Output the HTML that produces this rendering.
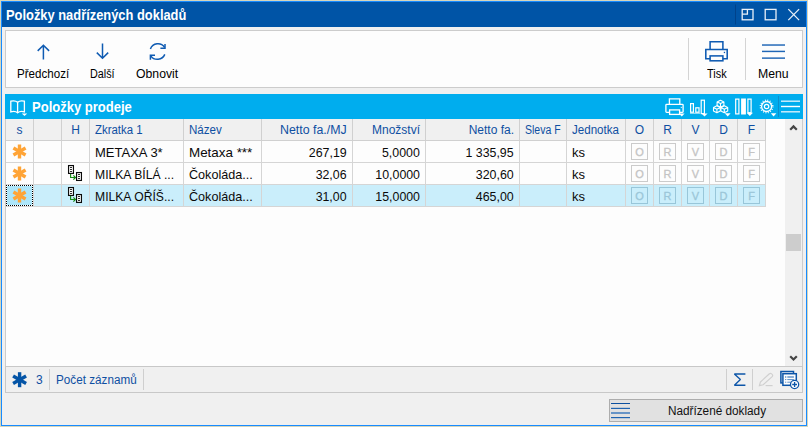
<!DOCTYPE html>
<html lang="cs">
<head>
<meta charset="utf-8">
<title>Položky nadřízených dokladů</title>
<style>
html,body{margin:0;padding:0;}
body{width:808px;height:427px;overflow:hidden;background:#d6d6bb;font-family:"Liberation Sans",sans-serif;position:relative;}
.abs{position:absolute;}
svg{display:block;overflow:visible;}
#win{left:1px;top:1px;width:804px;height:423px;border:1px solid #188bff;background:#f0f0f0;}
#title{left:2px;top:2px;width:804px;height:25px;background:#0054a6;}
#titletxt{left:6px;top:7px;color:#fff;font-weight:bold;font-size:14px;line-height:16px;white-space:nowrap;transform:scaleX(0.92);transform-origin:0 0;}
#tb{left:5px;top:30px;width:796px;height:56px;border:1px solid #ccc;background:#fdfdfd;}
.lbl{transform-origin:0 0;font-size:12px;line-height:14px;color:#000;white-space:nowrap;top:67px;}
.vsep{width:1px;background:#d4d4d4;}
#hdr{left:5px;top:94px;width:798px;height:25px;background:#00adee;}
#hdrtxt{left:32px;top:99px;color:#fff;font-weight:bold;font-size:14px;line-height:16px;white-space:nowrap;transform:scaleX(0.93);transform-origin:0 0;}
#grid{left:5px;top:119px;width:798px;height:247px;background:#fdfdfd;}
#gridl{left:5px;top:119px;width:1px;height:248px;background:#ccc;}
.hc{top:119px;height:21px;background:#f0f0f0;border-right:1px solid #d0d0d0;border-bottom:1px solid #d0d0d0;color:#0e4fa2;font-size:12px;line-height:22px;white-space:nowrap;overflow:hidden;}
.c{height:21px;border-right:1px solid #d5d5d5;border-bottom:1px solid #d5d5d5;font-size:13px;line-height:23px;color:#0a0a0a;white-space:nowrap;overflow:hidden;background:#fdfdfd;}
.c.sel{background:#caeefb;}
.c.foc{background:#ade6fa;}
.ast{position:absolute;left:6px;top:3px;}
.doc{position:absolute;left:6px;top:2px;}
.box{position:absolute;left:5px;top:2px;width:15px;height:15px;border:1px solid #cbcbcb;color:#c4c4c4;-webkit-text-stroke:0.3px #c4c4c4;font-size:11px;line-height:17px;text-align:center;}
.sel .box{border-color:#98c6d9;color:#9bc6d8;-webkit-text-stroke-color:#9bc6d8;}
#focusw{left:6px;top:185px;width:27px;height:21px;box-sizing:border-box;border:1px solid #fff;}
#focus{left:6px;top:185px;width:27px;height:21px;box-sizing:border-box;border:1px dotted #000;}
#sbtrack{left:785px;top:119px;width:17px;height:247px;background:#f0f0f0;}
#sbr{left:802px;top:119px;width:1px;height:248px;background:#ccc;}
#thumb{left:786px;top:234px;width:15px;height:17px;background:#cdcdcd;}
#status{left:5px;top:366px;width:796px;height:25px;border:1px solid #c8c8c8;background:#f0f0f0;}
.st{font-size:12px;line-height:14px;color:#0e4fa2;white-space:nowrap;top:373px;}
.ssep{width:1px;background:#cfcfcf;top:369px;height:21px;}
#btn{left:609px;top:399px;width:192px;height:21px;border:1px solid #adadad;background:#e1e1e1;}
#btntxt{left:609px;top:404px;width:216px;transform:scaleX(0.98);text-align:center;font-size:12px;line-height:14px;color:#111;white-space:nowrap;}
.sx{display:inline-block;transform-origin:0 50%;}
.r .sx{transform-origin:100% 50%;}
</style>
</head>
<body>
<div id="win" class="abs"></div>
<div id="title" class="abs"></div>
<div id="titletxt" class="abs">Položky nadřízených dokladů</div>
<!-- title buttons -->
<svg class="abs" style="left:730px;top:2px" width="76" height="25" viewBox="730 2 76 25">
 <line x1="735.5" y1="4.5" x2="735.5" y2="24.5" stroke="#00428a" stroke-width="1"/>
 <g fill="none" stroke="#e9f0f8" stroke-width="1.3">
  <rect x="742.2" y="9.4" width="10.8" height="10.4"/>
  <path d="M747.4 9.4v4.8h-5.2"/>
  <rect x="765.2" y="9.4" width="10.8" height="10.4"/>
  <path d="M788.3 9.1l10.8 11M799.1 9.1l-10.8 11"/>
 </g>
</svg>

<div id="tb" class="abs"></div>
<!-- toolbar icons -->
<svg class="abs" style="left:6px;top:31px" width="796" height="56" viewBox="6 31 796 56">
 <g fill="none" stroke="#0f5bb2" stroke-width="1.5">
  <path d="M43.4 59.6V45.4M37.7 50.9l5.7-5.7l5.7 5.7"/>
  <path d="M102.5 43.5V58.2M96.8 52.6l5.7 5.7l5.7-5.7"/>
  <!-- refresh -->
  <path d="M150.4 49A8 8 0 0 1 164.6 47.4"/>
  <path d="M165 44v4.2h-4.6"/>
  <path d="M164.8 54.4A8 8 0 0 1 150.8 55.8"/>
  <path d="M150.4 59.8v-4.6h4.6"/>
 </g>
 <!-- printer -->
 <g fill="none" stroke="#0f5bb2" stroke-width="1.55" stroke-linejoin="miter">
  <path d="M710.1 49.4V41.8H722.9V49.4"/>
  <path d="M710.1 58.8H705.8V49.4H727.2V58.8H722.9"/>
  <rect x="710.1" y="55.9" width="12.8" height="4.9"/>
 </g>
 <rect x="723.8" y="51.8" width="1.3" height="1.3" fill="#0f5bb2"/>
 <!-- menu -->
 <g fill="#1f66b6">
  <rect x="762" y="44.3" width="23" height="1.45"/>
  <rect x="762" y="50.7" width="23" height="1.45"/>
  <rect x="762" y="57.4" width="23" height="1.45"/>
 </g>
</svg>
<div class="abs vsep" style="left:688px;top:38px;height:42px"></div>
<div class="abs vsep" style="left:745px;top:38px;height:42px"></div>
<div id="l1" class="abs lbl" style="left:17px;transform:scaleX(0.965)">Předchozí</div>
<div id="l2" class="abs lbl" style="left:90px;transform:scaleX(0.9)">Další</div>
<div id="l3" class="abs lbl" style="left:136px;transform:scaleX(1.02)">Obnovit</div>
<div id="l4" class="abs lbl" style="left:707px;transform:scaleX(0.91)">Tisk</div>
<div id="l5" class="abs lbl" style="left:758px;transform:scaleX(1.02)">Menu</div>

<div id="hdr" class="abs"></div>
<div id="hdrtxt" class="abs">Položky prodeje</div>
<!-- header icons -->
<svg class="abs" style="left:5px;top:94px" width="798" height="25" viewBox="5 94 798 25">
 <!-- book -->
 <g fill="none" stroke="#fff" stroke-width="1.3">
  <path d="M17.6 102.2c-1.6-1.4-4.6-1.6-6.8-1v10.600000000000001c2.2-0.6 5.2-0.4 6.8 1c1.6-1.4 4.6-1.6 6.8-1v-10.600000000000001c-2.2-0.6-5.2-0.4-6.8 1z"/>
  <path d="M17.6 102.2v10.6"/>
 </g>
 <path d="M21.8 113.4h5.4l-2.700000000000003 2.6z" fill="#fff"/>
 <!-- printer -->
 <g fill="none" stroke="#fff" stroke-width="1.3">
  <path d="M669.4 104.2v-5.3h10.4v5.3"/>
  <path d="M669.4 112.3h-2.8a0.7 0.7 0 0 1-0.7-0.7v-6.6a0.7 0.7 0 0 1 0.7-0.7h15.8a0.7 0.7 0 0 1 0.7 0.7v6.6a0.7 0.7 0 0 1-0.7 0.7h-2.8"/>
  <rect x="669.6" y="109.9" width="10" height="4.5"/>
  <rect x="680.8" y="106.9" width="1" height="1" fill="#fff" stroke="none"/>
 </g>
 <path d="M679 113.5h5.6l-2.8 2.9z" fill="#fff"/>
 <!-- bars -->
 <g fill="none" stroke="#fff" stroke-width="1.2">
  <rect x="690.6" y="103.6" width="2.8" height="8.6"/>
  <rect x="695.8" y="107.8" width="3.2" height="4.4"/>
  <rect x="701.2" y="100.2" width="3.2" height="13.4"/>
 </g>
 <path d="M701.4 113.4h6.2l-3.1 3.1z" fill="#fff"/>
 <path d="M690 113.2h10" stroke="#fff" stroke-width="1" fill="none" opacity="0.8"/>
 <!-- cubes -->
 <g fill="none" stroke="#fff" stroke-width="1.1" stroke-linejoin="round">
  <path d="M720.5 100.2l3.4 1.7v3.6l-3.4 1.7l-3.4-1.7v-3.6zM717.1 101.9l3.4 1.7l3.4-1.7M720.5 103.6v3.6"/>
  <path d="M716.9 105.8l3.4 1.7v3.6l-3.4 1.7l-3.4-1.7v-3.6zM713.5 107.5l3.4 1.7l3.4-1.7M716.9 109.2v3.6"/>
  <path d="M724.3 105.8l3.4 1.7v3.6l-3.4 1.7l-3.4-1.7v-3.6zM720.9 107.5l3.4 1.7l3.4-1.7M724.3 109.2v3.6"/>
 </g>
 <path d="M724.8 113.3h5.8l-2.9 3.1z" fill="#fff"/>
 <!-- columns -->
 <g fill="none" stroke="#fff" stroke-width="1.2">
  <rect x="735.7" y="99.1" width="3.2" height="14.8"/>
  <rect x="747.9" y="99.1" width="3.2" height="13.6"/>
 </g>
 <rect x="741.1" y="98.5" width="4.8" height="16" fill="#fff"/>
 <path d="M746.6 112.8h6.4l-3.2 3.2z" fill="#fff"/>
 <!-- gear -->
 <g fill="none" stroke="#fff">
  <circle cx="766.6" cy="106.5" r="6.2" stroke-width="1.5" stroke-dasharray="0.9 1.535"/>
  <circle cx="766.6" cy="106.5" r="5" stroke-width="1.3"/>
  <circle cx="766.6" cy="106.5" r="2.2" stroke-width="1.2"/>
 </g>
 <path d="M770.8 113.3h5.6l-2.8 3.2z" fill="#fff"/>
 <line x1="778.5" y1="96" x2="778.5" y2="117" stroke="#0b8fcc" stroke-width="1"/>
 <g fill="#d6f0fb">
  <rect x="781" y="100.5" width="19" height="1.4"/>
  <rect x="781" y="105.8" width="19" height="1.4" fill="#fff"/>
  <rect x="781" y="111.1" width="19" height="1.4"/>
 </g>
</svg>

<div id="grid" class="abs"></div>
<div class="abs hc" style="left:6px;text-align:center;width:27px;">s</div>
<div class="abs hc" style="left:34px;padding-left:5px;width:22px;"></div>
<div class="abs hc" style="left:62px;text-align:center;width:27px;">H</div>
<div class="abs hc" style="left:90px;padding-left:5px;width:88px;"><span class="sx" style="transform:scaleX(0.95)">Zkratka 1</span></div>
<div class="abs hc" style="left:184px;padding-left:5px;width:72px;"><span class="sx" style="transform:scaleX(0.965)">Název</span></div>
<div class="abs hc r" style="left:262px;padding-right:5px;text-align:right;width:85px;"><span class="sx" style="transform:scaleX(1.03)">Netto fa./MJ</span></div>
<div class="abs hc r" style="left:353px;padding-right:5px;text-align:right;width:67px;">Množství</div>
<div class="abs hc r" style="left:426px;padding-right:5px;text-align:right;width:88px;">Netto fa.</div>
<div class="abs hc" style="left:520px;padding-left:5px;width:41px;"><span class="sx" style="transform:scaleX(0.875)">Sleva F</span></div>
<div class="abs hc" style="left:567px;padding-left:5px;width:53px;"><span class="sx" style="transform:scaleX(0.965)">Jednotka</span></div>
<div class="abs hc" style="left:626px;text-align:center;width:27px;">O</div>
<div class="abs hc" style="left:654px;text-align:center;width:27px;">R</div>
<div class="abs hc" style="left:682px;text-align:center;width:27px;">V</div>
<div class="abs hc" style="left:710px;text-align:center;width:27px;">D</div>
<div class="abs hc" style="left:738px;text-align:center;width:27px;">F</div>
<div class="abs c k0" style="left:6px;top:141px;width:27px;"><svg class="ast" width="15" height="15" viewBox="-7.5 -7.5 15 15"><g stroke="#ffa436" stroke-width="3.4" stroke-linecap="butt"><line x1="0" y1="-7" x2="0" y2="7"/><line x1="-6.06" y1="-3.5" x2="6.06" y2="3.5"/><line x1="-6.06" y1="3.5" x2="6.06" y2="-3.5"/></g></svg></div>
<div class="abs c k1" style="left:34px;top:141px;padding-left:5px;width:22px;"></div>
<div class="abs c k2" style="left:62px;top:141px;width:27px;"></div>
<div class="abs c k3" style="left:90px;top:141px;padding-left:5px;width:88px;">METAXA 3*</div>
<div class="abs c k4" style="left:184px;top:141px;padding-left:5px;width:72px;"><span class="sx" style="transform:scaleX(1.03)">Metaxa ***</span></div>
<div class="abs c r k5" style="left:262px;top:141px;padding-right:5px;text-align:right;width:85px;"><span class="sx" style="transform:scaleX(0.955)">267,19</span></div>
<div class="abs c r k6" style="left:353px;top:141px;padding-right:5px;text-align:right;width:67px;"><span class="sx" style="transform:scaleX(0.95)">5,0000</span></div>
<div class="abs c r k7" style="left:426px;top:141px;padding-right:5px;text-align:right;width:88px;"><span class="sx" style="transform:scaleX(0.95)">1 335,95</span></div>
<div class="abs c k8" style="left:520px;top:141px;padding-left:5px;width:41px;"></div>
<div class="abs c k9" style="left:567px;top:141px;padding-left:5px;width:53px;">ks</div>
<div class="abs c k10" style="left:626px;top:141px;width:27px;"><div class="box">O</div></div>
<div class="abs c k11" style="left:654px;top:141px;width:27px;"><div class="box">R</div></div>
<div class="abs c k12" style="left:682px;top:141px;width:27px;"><div class="box">V</div></div>
<div class="abs c k13" style="left:710px;top:141px;width:27px;"><div class="box">D</div></div>
<div class="abs c k14" style="left:738px;top:141px;width:27px;"><div class="box">F</div></div>
<div class="abs c k0" style="left:6px;top:163px;width:27px;"><svg class="ast" width="15" height="15" viewBox="-7.5 -7.5 15 15"><g stroke="#ffa436" stroke-width="3.4" stroke-linecap="butt"><line x1="0" y1="-7" x2="0" y2="7"/><line x1="-6.06" y1="-3.5" x2="6.06" y2="3.5"/><line x1="-6.06" y1="3.5" x2="6.06" y2="-3.5"/></g></svg></div>
<div class="abs c k1" style="left:34px;top:163px;padding-left:5px;width:22px;"></div>
<div class="abs c k2" style="left:62px;top:163px;width:27px;"><svg class="doc" width="16" height="17" viewBox="0 0 16 17"><g fill="#fdfdfd" stroke="#0a0a0a" stroke-width="1.15"><rect x="0.55" y="0.55" width="4.9" height="7.9"/><rect x="8.55" y="7.55" width="4.9" height="7.9"/></g><g fill="#1a1a1a"><rect x="2" y="2.1" width="2" height="0.9"/><rect x="2" y="4.1" width="2" height="0.9"/><rect x="2" y="6.1" width="2" height="0.9"/><rect x="10" y="9.1" width="2" height="0.9"/><rect x="10" y="11.1" width="2" height="0.9"/><rect x="10" y="13.1" width="2" height="0.9"/></g><path d="M2.6 9v3.5h4.6M5.4 10.4l2.1 2.1l-2.1 2.1" fill="none" stroke="#148a14" stroke-width="1.15"/></svg></div>
<div class="abs c k3" style="left:90px;top:163px;padding-left:5px;width:88px;"><span class="sx" style="transform:scaleX(0.935)">MILKA BÍLÁ ...</span></div>
<div class="abs c k4" style="left:184px;top:163px;padding-left:5px;width:72px;"><span class="sx" style="transform:scaleX(0.97)">Čokoláda...</span></div>
<div class="abs c r k5" style="left:262px;top:163px;padding-right:5px;text-align:right;width:85px;"><span class="sx" style="transform:scaleX(0.95)">32,06</span></div>
<div class="abs c r k6" style="left:353px;top:163px;padding-right:5px;text-align:right;width:67px;"><span class="sx" style="transform:scaleX(0.95)">10,0000</span></div>
<div class="abs c r k7" style="left:426px;top:163px;padding-right:5px;text-align:right;width:88px;"><span class="sx" style="transform:scaleX(0.955)">320,60</span></div>
<div class="abs c k8" style="left:520px;top:163px;padding-left:5px;width:41px;"></div>
<div class="abs c k9" style="left:567px;top:163px;padding-left:5px;width:53px;">ks</div>
<div class="abs c k10" style="left:626px;top:163px;width:27px;"><div class="box">O</div></div>
<div class="abs c k11" style="left:654px;top:163px;width:27px;"><div class="box">R</div></div>
<div class="abs c k12" style="left:682px;top:163px;width:27px;"><div class="box">V</div></div>
<div class="abs c k13" style="left:710px;top:163px;width:27px;"><div class="box">D</div></div>
<div class="abs c k14" style="left:738px;top:163px;width:27px;"><div class="box">F</div></div>
<div class="abs c sel foc k0" style="left:6px;top:185px;width:27px;"><svg class="ast" width="15" height="15" viewBox="-7.5 -7.5 15 15"><g stroke="#ffa436" stroke-width="3.4" stroke-linecap="butt"><line x1="0" y1="-7" x2="0" y2="7"/><line x1="-6.06" y1="-3.5" x2="6.06" y2="3.5"/><line x1="-6.06" y1="3.5" x2="6.06" y2="-3.5"/></g></svg></div>
<div class="abs c sel k1" style="left:34px;top:185px;padding-left:5px;width:22px;"></div>
<div class="abs c sel k2" style="left:62px;top:185px;width:27px;"><svg class="doc" width="16" height="17" viewBox="0 0 16 17"><g fill="#fdfdfd" stroke="#0a0a0a" stroke-width="1.15"><rect x="0.55" y="0.55" width="4.9" height="7.9"/><rect x="8.55" y="7.55" width="4.9" height="7.9"/></g><g fill="#1a1a1a"><rect x="2" y="2.1" width="2" height="0.9"/><rect x="2" y="4.1" width="2" height="0.9"/><rect x="2" y="6.1" width="2" height="0.9"/><rect x="10" y="9.1" width="2" height="0.9"/><rect x="10" y="11.1" width="2" height="0.9"/><rect x="10" y="13.1" width="2" height="0.9"/></g><path d="M2.6 9v3.5h4.6M5.4 10.4l2.1 2.1l-2.1 2.1" fill="none" stroke="#148a14" stroke-width="1.15"/></svg></div>
<div class="abs c sel k3" style="left:90px;top:185px;padding-left:5px;width:88px;"><span class="sx" style="transform:scaleX(0.935)">MILKA OŘÍŠ...</span></div>
<div class="abs c sel k4" style="left:184px;top:185px;padding-left:5px;width:72px;"><span class="sx" style="transform:scaleX(0.97)">Čokoláda...</span></div>
<div class="abs c sel r k5" style="left:262px;top:185px;padding-right:5px;text-align:right;width:85px;"><span class="sx" style="transform:scaleX(0.95)">31,00</span></div>
<div class="abs c sel r k6" style="left:353px;top:185px;padding-right:5px;text-align:right;width:67px;"><span class="sx" style="transform:scaleX(0.95)">15,0000</span></div>
<div class="abs c sel r k7" style="left:426px;top:185px;padding-right:5px;text-align:right;width:88px;"><span class="sx" style="transform:scaleX(0.955)">465,00</span></div>
<div class="abs c sel k8" style="left:520px;top:185px;padding-left:5px;width:41px;"></div>
<div class="abs c sel k9" style="left:567px;top:185px;padding-left:5px;width:53px;">ks</div>
<div class="abs c sel k10" style="left:626px;top:185px;width:27px;"><div class="box">O</div></div>
<div class="abs c sel k11" style="left:654px;top:185px;width:27px;"><div class="box">R</div></div>
<div class="abs c sel k12" style="left:682px;top:185px;width:27px;"><div class="box">V</div></div>
<div class="abs c sel k13" style="left:710px;top:185px;width:27px;"><div class="box">D</div></div>
<div class="abs c sel k14" style="left:738px;top:185px;width:27px;"><div class="box">F</div></div>
<div class="abs" style="left:766px;top:119px;width:19px;height:22px;background:#fdfdfd"></div>
<div id="gridl" class="abs"></div>
<div id="focusw" class="abs"></div>
<div id="focus" class="abs"></div>
<div id="sbtrack" class="abs"></div>
<div id="sbr" class="abs"></div>
<div id="thumb" class="abs"></div>
<svg class="abs" style="left:785px;top:120px" width="17" height="246" viewBox="785 120 17 246">
 <g fill="none" stroke="#454545" stroke-width="2.2">
  <path d="M790.2 129.7l3.3-3.3l3.3 3.3"/>
  <path d="M790.2 356.2l3.3 3.3l3.3-3.3"/>
 </g>
</svg>

<div id="status" class="abs"></div>
<svg class="abs" style="left:6px;top:367px" width="796" height="25" viewBox="6 367 796 25">
 <g stroke="#0454a6" stroke-width="3.4">
  <line x1="19.6" y1="372.2" x2="19.6" y2="387.2"/>
  <line x1="13.1" y1="375.95" x2="26.1" y2="383.45"/>
  <line x1="13.1" y1="383.45" x2="26.1" y2="375.95"/>
 </g>
 <!-- sigma -->
 <path d="M745.4 374h-11l6 5.6l-6 5.6h11" fill="none" stroke="#0c55a8" stroke-width="1.35" stroke-linejoin="bevel"/>
 <!-- pencil -->
 <g fill="none" stroke="#d0d0d0" stroke-width="1.2">
  <path d="M759.4 385.6l1-3.600000000000023l9-8.199999999999989a1.5 1.5 0 0 1 2.2 0l0.6 0.6a1.5 1.5 0 0 1 0 2.2l-9 8.2z"/>
  <path d="M765.6 385.6h7"/>
 </g>
 <!-- docs -->
 <g>
  <rect x="780.9" y="371.5" width="12.6" height="11.4" fill="#f4f6f9" stroke="#0c55a8" stroke-width="1.5"/>
  <rect x="782.9" y="373.7" width="13.4" height="11.6" fill="#fdfdfd" stroke="#0c55a8" stroke-width="1.5"/>
  <path d="M785 377h1.3M787.3 377h6.6" stroke="#1d62b0" stroke-width="1.1" fill="none"/>
  <path d="M785 379.6h1.3M787.3 379.6h6.6M785 382.2h1.3M787.3 382.2h4" stroke="#5a8fca" stroke-width="1" fill="none"/>
  <circle cx="794.6" cy="384.5" r="4.1" fill="#fff" stroke="#0c55a8" stroke-width="1.3"/>
  <path d="M792.2 384.5h4.8M794.6 382.1v4.8" stroke="#0c55a8" stroke-width="1.3" fill="none"/>
 </g>
</svg>
<div class="abs ssep" style="left:49px"></div>
<div class="abs ssep" style="left:143px"></div>
<div class="abs ssep" style="left:726px"></div>
<div class="abs ssep" style="left:752px"></div>
<div id="s1" class="abs st" style="left:36px">3</div>
<div id="s2" class="abs st" style="left:56px;transform:scaleX(0.975);transform-origin:0 0">Počet záznamů</div>

<div id="btn" class="abs"></div>
<svg class="abs" style="left:610px;top:400px" width="24" height="21" viewBox="610 400 24 21">
 <g fill="#1f63b0">
  <rect x="611" y="403" width="19" height="1" fill="#0b4f9f"/>
  <rect x="611" y="407.8" width="19" height="1.2"/>
  <rect x="611" y="412.2" width="19" height="1.6" fill="#4a82c0"/>
  <rect x="611" y="417" width="19" height="1.2"/>
 </g>
</svg>
<div id="btntxt" class="abs">Nadřízené doklady</div>
</body>
</html>
